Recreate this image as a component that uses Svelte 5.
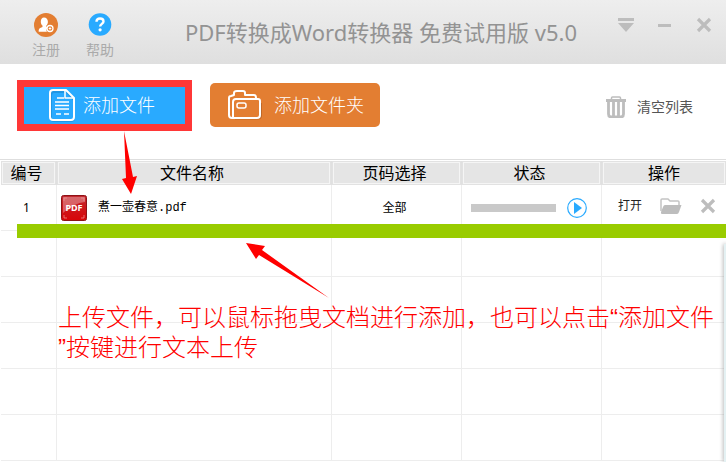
<script>
  let files = $state([{ id: 1, name: '煮一壶春意.pdf', pages: '全部', progress: 0 }]);

  const emptyRows = 5;

  function removeFile(id) {
    files = files.filter(f => f.id !== id);
  }

  function clearList() {
    files = [];
  }
</script>

<div class="window">
  <header class="titlebar">
    <nav class="links">
      <button class="link">
        <svg width="24" height="24" viewBox="0 0 24 24">
          <circle cx="12" cy="12" r="12" fill="#e37e32" />
          <path d="M10 4.500c2.400 0 3.900 1.700 3.900 4.200 0 1.700-.7 3-1.600 3.900v1.200l1.200.6a4 4 0 0 0-.6 4.300H4.700c-.3-2.600.9-3.600 2.600-4.200l1.200-.6v-1.300c-1-.9-1.700-2.200-1.700-3.900 0-2.500 1.100-4.200 3.200-4.200z" fill="#fff" />
          <circle cx="16" cy="15.500" r="3" fill="#e37e32" stroke="#fff" stroke-width="1.300" />
          <path d="M16 14.200v2.600M14.700 15.500h2.600" stroke="#fff" />
        </svg>
        <span>注册</span>
      </button>
      <button class="link">
        <svg width="24" height="24" viewBox="0 0 24 24">
          <circle cx="12" cy="11.500" r="11.300" fill="#29aaff" />
          <path d="M8.500 8.800C8.500 6.600 9.800 5.500 12 5.500s3.500 1.200 3.500 3c0 2.300-3.400 2.500-3.400 5" fill="none" stroke="#fff" stroke-width="2.400" />
          <circle cx="12.100" cy="16.800" r="1.600" fill="#fff" />
        </svg>
        <span>帮助</span>
      </button>
    </nav>
    <h1>PDF转换成Word转换器 免费试用版 v5.0</h1>
    <div class="controls">
      <button aria-label="菜单">
        <svg width="16" height="16" viewBox="0 0 16 16">
          <path d="M0 1h16v3H0zM0 6h16l-8 9z" fill="#bdbdbd" />
        </svg>
      </button>
      <button aria-label="最小化">
        <svg width="16" height="16" viewBox="0 0 16 16">
          <path d="M1 7h13v3H1z" fill="#bdbdbd" />
        </svg>
      </button>
      <button aria-label="关闭">
        <svg width="16" height="16" viewBox="0 0 16 16">
          <path d="M2 2l12 12M14 2L2 14" stroke="#bdbdbd" stroke-width="3.200" />
        </svg>
      </button>
    </div>
  </header>

  <div class="toolbar">
    <button class="add add-file">
      <svg width="27" height="33" viewBox="0 0 27 33" fill="none" stroke="#fff" stroke-width="2" stroke-linejoin="round">
        <path d="M18 3l7 8v18q0 3-3 3H5q-3 0-3-3V6q0-3 3-3h10" stroke="#1782c8" stroke-opacity=".5" />
        <path d="M16 1H4Q1 1 1 4v24q0 3 3 3h18q3 0 3-3V9L17 1z" />
        <path d="M16 2v7h9" stroke-width="1.500" />
        <path d="M8 9h7M6 13h14M6 16.500h14M6 20h14M7 25h5M15 25h5" stroke-width="1.500" />
      </svg>
      <span>添加文件</span>
    </button>
    <button class="add add-folder">
      <svg width="34" height="30" viewBox="0 0 34 30" fill="none" stroke="#fff" stroke-width="2" stroke-linejoin="round">
        <path d="M7 28.500h23q3 0 3-3V13" stroke="#a85a20" stroke-opacity=".6" />
        <path d="M5 28H4q-3 0-3-3V8q0-2 2-2l3-1V3q0-2 3-2h6q2 0 2 2v2h9q2 0 2 3" />
        <path d="M5 28h24q3 0 3-3V11q0-2-2-2H8Q5 9 5 12z" />
        <rect x="9" y="13" width="9" height="5" rx="2" stroke-width="1.500" />
      </svg>
      <span>添加文件夹</span>
    </button>
    <button class="clear" onclick={clearList}>
      <svg width="20" height="22" viewBox="0 0 20 22" fill="none" stroke="#bdbdbd">
        <path d="M5.500 4V2q0-1 1-1h7q1 0 1 1v2" stroke-width="1.500" />
        <path d="M0 4.500h20" stroke-width="3" />
        <path d="M2.500 6v12q0 3 3 3h9q3 0 3-3V6M7.500 6v14M12.500 6v14" stroke-width="2.800" />
      </svg>
      <span>清空列表</span>
    </button>
  </div>

  <main class="list">
    <table>
      <thead>
        <tr>
          <th class="col-id">编号</th>
          <th>文件名称</th>
          <th class="col-pages">页码选择</th>
          <th class="col-status">状态</th>
          <th class="col-actions">操作</th>
        </tr>
      </thead>
      <tbody>
        {#each files as file (file.id)}
          <tr>
            <td class="center">{file.id}</td>
            <td>
              <div class="file">
                <svg width="26" height="26" viewBox="0 0 26 26">
                  <defs>
                    <linearGradient id="pdf-red" x1="0" y1="0" x2="0" y2="1">
                      <stop offset="0" stop-color="#c22a30" />
                      <stop offset="1" stop-color="#d80508" />
                    </linearGradient>
                  </defs>
                  <rect x=".5" y=".5" width="25" height="25" rx="2" fill="url(#pdf-red)" stroke="#8e1216" />
                  <path d="M2 2h22v5Q13 8 2 18z" fill="#fff" opacity=".3" />
                  <path d="M3 6V3h3M20 3h3v3M3 20v3h3M20 23h3v-3" fill="none" stroke="#f09a9a" stroke-width=".7" />
                  <text x="13" y="16" text-anchor="middle" class="badge">PDF</text>
                </svg>
                <span>{file.name}</span>
              </div>
            </td>
            <td class="center">{file.pages}</td>
            <td>
              <div class="status">
                <div class="progress">
                  <div class="bar" style="width: {file.progress}%"></div>
                </div>
                <button aria-label="开始">
                  <svg width="20" height="20" viewBox="0 0 20 20">
                    <circle cx="10" cy="10" r="9.300" fill="#fff" stroke="#29aaff" stroke-width="1.200" />
                    <path d="M7 4v12l8-6z" fill="#29aaff" />
                  </svg>
                </button>
              </div>
            </td>
            <td>
              <div class="actions">
                <button>打开</button>
                <button aria-label="打开文件夹">
                  <svg width="22" height="16" viewBox="0 0 22 16">
                    <path d="M1 13V2q0-1 1-1h6l2 2h8q1 0 1 1v4" fill="none" stroke="#c4c4c4" stroke-width="1.500" />
                    <path d="M5 7h16.500L19 14q-.6 2-2 2H2q-1.500 0-1-2l2-5q.6-2 2-2z" fill="#bdbdbd" />
                  </svg>
                </button>
                <button aria-label="删除" onclick={() => removeFile(file.id)}>
                  <svg width="16" height="16" viewBox="0 0 16 16">
                    <path d="M2 2l12 12M14 2L2 14" stroke="#bdbdbd" stroke-width="3.200" />
                  </svg>
                </button>
              </div>
            </td>
          </tr>
        {/each}
        {#each { length: emptyRows } as _}
          <tr><td></td><td></td><td></td><td></td><td></td></tr>
        {/each}
      </tbody>
    </table>

    <div class="highlight"></div>
    <svg class="arrow arrow-add" width="18" height="64" viewBox="0 0 18 64">
      <path d="M3 0L12 46l4-1-6 18-9-15 4-1z" fill="#f00" />
    </svg>
    <svg class="arrow arrow-list" width="84" height="56" viewBox="0 0 84 56">
      <path d="M0 0l19 3-3 4 67 48L13 12l-3 4z" fill="#f00" />
    </svg>
    <p class="hint">上传文件，可以鼠标拖曳文档进行添加，也可以点击“添加文件”按键进行文本上传</p>
    <aside class="panel"></aside>
  </main>
</div>

<style>
  :global(body) {
    margin: 0;
    background: #fff;
  }

  .window {
    display: flex;
    flex-direction: column;
    height: 100vh;
    overflow: hidden;
    font-family: "Noto Sans", "Noto Sans CJK SC", sans-serif;
    color: #000;
  }

  button {
    padding: 0;
    border: none;
    background: none;
    font: inherit;
    color: inherit;
    cursor: pointer;
  }

  svg {
    display: block;
    flex: none;
  }

  .titlebar {
    display: flex;
    align-items: flex-start;
    box-sizing: border-box;
    height: 64px;
    padding: 0 14px 0 32px;
    background: linear-gradient(#eee, #dfdfdf);
  }

  .links {
    display: flex;
    gap: 26px;
    padding-top: 13px;
  }

  .link {
    display: flex;
    flex-direction: column;
    align-items: center;
    gap: 3px;
    font-size: 14px;
    line-height: 20px;
    color: #aaa;
  }

  h1 {
    flex: 1;
    margin: 0;
    padding-left: 30px;
    text-align: center;
    font-size: 22px;
    line-height: 64px;
    font-weight: 400;
    color: #939393;
    white-space: nowrap;
  }

  .controls {
    display: flex;
    gap: 23px;
    padding-top: 17px;
  }

  .toolbar {
    display: flex;
    align-items: center;
    gap: 18px;
    height: 82px;
    padding: 0 33px 13px 17px;
  }

  .add {
    display: flex;
    align-items: center;
    box-sizing: border-box;
    color: #fff;
    font-size: 18px;
    line-height: 26px;
    font-weight: 300;
  }

  .add-file {
    gap: 7px;
    width: 175px;
    height: 51px;
    padding-left: 25px;
    border: 7px solid #ff3737;
    background: #29aaff;
  }

  .add-folder {
    gap: 12px;
    width: 170px;
    height: 44px;
    padding-left: 18px;
    border-radius: 5px;
    background: #e37e32;
  }

  .clear {
    display: flex;
    align-items: center;
    gap: 11px;
    margin-left: auto;
    padding-top: 4px;
    font-size: 14px;
    line-height: 20px;
    color: #555;
  }

  .list {
    position: relative;
    flex: 1;
    border-top: 1px solid #dedede;
    padding: 1px 0 0 1px;
  }

  table {
    width: 100%;
    table-layout: fixed;
    border-spacing: 0;
  }

  th {
    box-sizing: border-box;
    height: 24px;
    padding: 0 4px 0 0;
    border-right: 1px solid #e0e0e0;
    background: #e5e5e5;
    box-shadow: inset 0 0 0 1px #e2e2e2, inset 0 0 0 2px #f5f5f5;
    font-size: 16px;
    line-height: 24px;
    font-weight: 400;
  }

  td {
    height: 45px;
    padding: 0;
    border-right: 1px solid #ededed;
    border-bottom: 1px solid #ededed;
    font-size: 12px;
    line-height: 16px;
  }

  th:last-child,
  td:last-child {
    padding-right: 0;
    border-right: none;
  }

  .col-id {
    width: 56px;
  }

  .col-pages {
    width: 130px;
  }

  .col-status {
    width: 140px;
  }

  .col-actions {
    width: 124px;
  }

  .center {
    padding-right: 4px;
    text-align: center;
  }

  .file {
    display: flex;
    align-items: center;
    gap: 11px;
    padding-left: 4px;
    font-family: "Liberation Mono", "Noto Sans CJK SC", monospace;
  }

  .badge {
    font: 700 9px "Noto Sans", sans-serif;
    fill: #fff;
  }

  .status {
    display: flex;
    align-items: center;
    gap: 11px;
    padding: 0 14px 0 9px;
  }

  .progress {
    flex: 1;
    height: 8px;
    background: #c9c9c9;
  }

  .bar {
    height: 100%;
    background: #29aaff;
  }

  .actions {
    display: flex;
    align-items: center;
    gap: 18px;
    padding: 0 0 4px 16px;
    color: #222;
  }

  .highlight {
    position: absolute;
    top: 64px;
    left: 17px;
    right: 0;
    height: 14px;
    background: #9c0;
  }

  .arrow {
    position: absolute;
  }

  .arrow-add {
    top: -29px;
    left: 121px;
  }

  .arrow-list {
    top: 83px;
    left: 246px;
  }

  .hint {
    position: absolute;
    top: 143px;
    left: 58px;
    right: 8px;
    margin: 0;
    font-family: "Liberation Sans", "Noto Sans CJK SC", sans-serif;
    font-size: 24px;
    line-height: 30px;
    font-weight: 300;
    color: #f00;
    word-break: break-all;
    line-break: anywhere;
  }

  .panel {
    position: absolute;
    top: 84px;
    right: 0;
    bottom: 0;
    width: 2px;
    background: #e4f1f3;
    box-shadow: 0 0 4px #777;
  }
</style>
